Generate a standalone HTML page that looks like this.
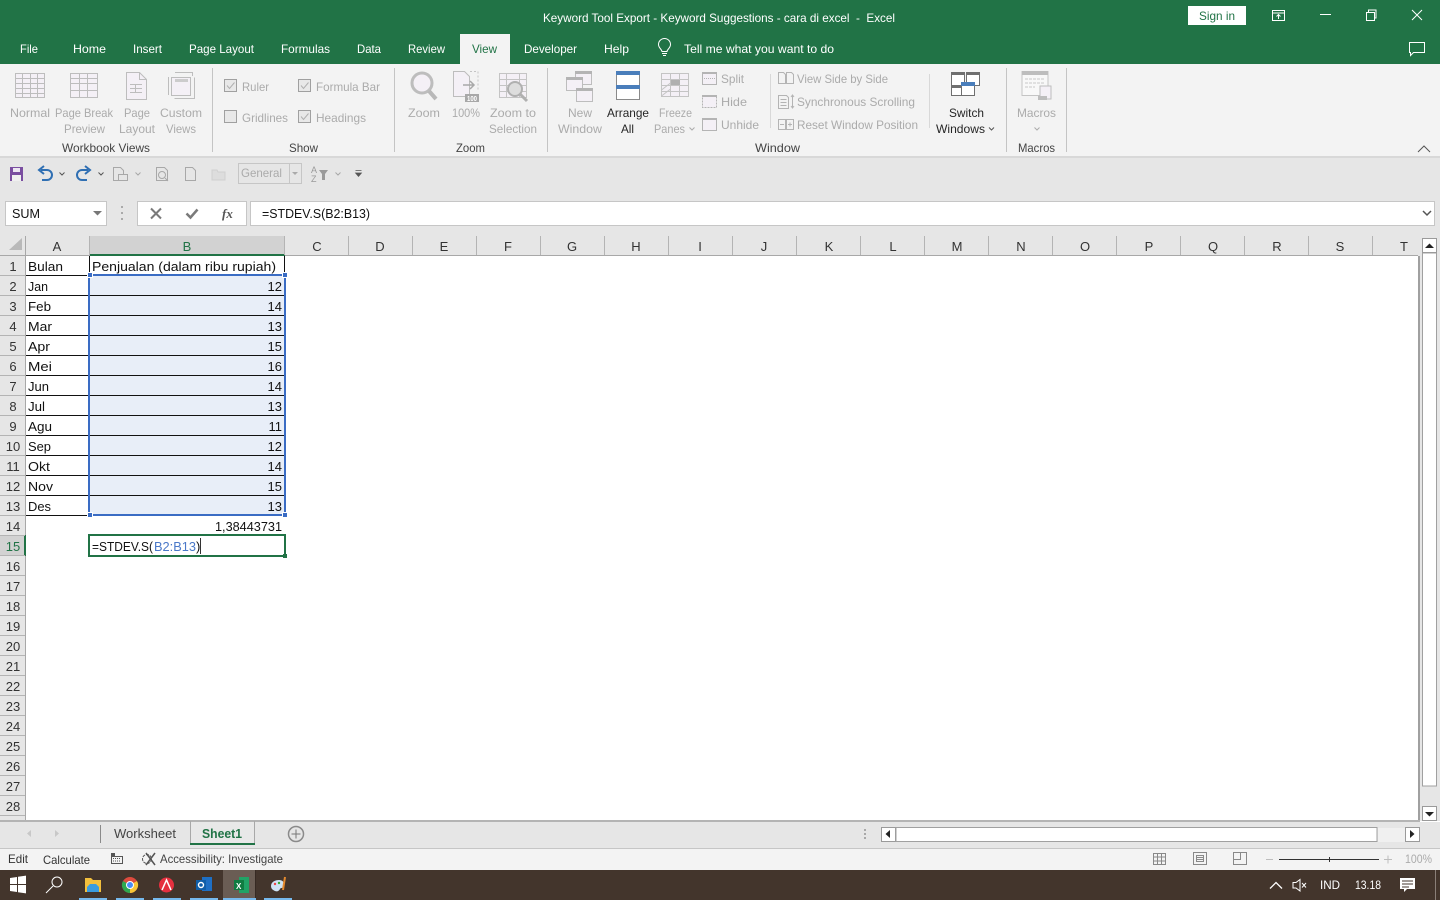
<!DOCTYPE html>
<html lang="id"><head><meta charset="utf-8"><title>Keyword Tool Export - Excel</title>
<style>
html,body{margin:0;padding:0;width:1440px;height:900px;overflow:hidden;background:#fff}
svg{display:block;position:absolute;left:0;top:0}
text{font-family:"Liberation Sans",sans-serif;font-size:12px;white-space:pre}
.w{fill:#fff}.g{fill:#ababab}.d{fill:#444}.k{fill:#262626}
.c{font-size:13px;fill:#111}.h{font-size:13px;fill:#333;text-anchor:middle}
</style></head><body>
<svg width="1440" height="900" viewBox="0 0 1440 900" xmlns="http://www.w3.org/2000/svg">
<!-- chrome backgrounds -->
<rect width="1440" height="64" fill="#217346"/>
<rect y="64" width="1440" height="92" fill="#f3f3f3"/>
<rect y="156" width="1440" height="2" fill="#d8d8d8"/>
<rect y="158" width="1440" height="78" fill="#e6e6e6"/>
<rect y="236" width="1440" height="585" fill="#e6e6e6"/>
<!-- title -->
<text class="w" x="543" y="22" textLength="352" lengthAdjust="spacingAndGlyphs">Keyword Tool Export - Keyword Suggestions - cara di excel  -  Excel</text>
<rect x="1188" y="6" width="58" height="19" fill="#fff"/>
<text x="1199" y="20" fill="#217346" textLength="36" lengthAdjust="spacingAndGlyphs">Sign in</text>
<g fill="none" stroke="#fff" stroke-width="1">
<rect x="1272.5" y="10.5" width="12" height="10"/><path d="M1273 13h11M1278.500 19v-4M1276.500 16.500l2-2 2 2"/>
<path d="M1320 14.500h11"/>
<rect x="1366.500" y="12.500" width="8" height="8"/><path d="M1368.500 12v-2h7.500v8h-1.500"/>
<path d="M1412 10l10 10M1422 10l-10 10"/>
<path d="M1409.500 42.500h15v10h-11l-3 3v-3h-1z"/>
</g>
<!-- tabs -->
<g class="w">
<text class="w" x="20" y="53" textLength="18" lengthAdjust="spacingAndGlyphs">File</text>
<text class="w" x="73" y="53" textLength="33" lengthAdjust="spacingAndGlyphs">Home</text>
<text class="w" x="133" y="53" textLength="29" lengthAdjust="spacingAndGlyphs">Insert</text>
<text class="w" x="189" y="53" textLength="65" lengthAdjust="spacingAndGlyphs">Page Layout</text>
<text class="w" x="281" y="53" textLength="49" lengthAdjust="spacingAndGlyphs">Formulas</text>
<text class="w" x="357" y="53" textLength="24" lengthAdjust="spacingAndGlyphs">Data</text>
<text class="w" x="408" y="53" textLength="37" lengthAdjust="spacingAndGlyphs">Review</text>
<text class="w" x="524" y="53" textLength="53" lengthAdjust="spacingAndGlyphs">Developer</text>
<text class="w" x="604" y="53" textLength="25" lengthAdjust="spacingAndGlyphs">Help</text>
<text class="w" x="684" y="53" textLength="150" lengthAdjust="spacingAndGlyphs">Tell me what you want to do</text>
</g>
<rect x="460" y="34" width="50" height="30" fill="#f3f3f3"/>
<text x="472" y="53" fill="#217346" textLength="25" lengthAdjust="spacingAndGlyphs">View</text>
<path d="M662 51.500c0-2-3.500-3.500-3.500-7a6 6 0 0 1 12 0c0 3.500-3.500 5-3.500 7zM662 53.500h5M663 55.500h3" fill="none" stroke="#fff"/>
<!-- ribbon separators -->
<g fill="#c4c4c4">
<rect x="212" y="68" width="1" height="84"/><rect x="394" y="68" width="1" height="84"/><rect x="547" y="68" width="1" height="84"/>
<rect x="1006" y="68" width="1" height="84"/><rect x="1066" y="68" width="1" height="84"/>
<rect x="770" y="74" width="1" height="54" fill="#d8d8d8"/><rect x="929" y="74" width="1" height="54" fill="#d8d8d8"/>
</g>
<!-- workbook views icons -->
<g fill="#f4f0f6" stroke="#bdbdbd">
<rect x="15.500" y="73.500" width="29" height="24"/>
<path d="M15.500 78.500h29M15.500 83.500h29M15.500 88.500h29M15.500 93.500h29M22.500 73.500v24M30.500 73.500v24M37.500 73.500v24" fill="none"/>
<rect x="70.500" y="73.500" width="27" height="24"/>
<path d="M70.500 78.500h27M70.500 83.500h27M70.500 90.500h27M79.500 73.500v24M87.500 73.500v24" fill="none"/>
<path d="M126.500 72.500h13l7 7v20h-20z"/><path d="M139.500 72.500v7h7M130 84.500h12M130 88.500h12M130 92.500h12M135.500 84v9" fill="none"/>
<rect x="171.500" y="77.500" width="19" height="18"/><rect x="175" y="79" width="13" height="3" fill="#ccc" stroke="none"/>
<path d="M168.500 77v18M175 72.500h17M192.500 72v4M194.500 77.500v21h-20" fill="none"/>
</g>
<g class="g">
<text class="g" x="10" y="117" textLength="40" lengthAdjust="spacingAndGlyphs">Normal</text>
<text class="g" x="55" y="117" textLength="58" lengthAdjust="spacingAndGlyphs">Page Break</text>
<text class="g" x="64" y="133" textLength="41" lengthAdjust="spacingAndGlyphs">Preview</text>
<text class="g" x="124" y="117" textLength="26" lengthAdjust="spacingAndGlyphs">Page</text>
<text class="g" x="119" y="133" textLength="36" lengthAdjust="spacingAndGlyphs">Layout</text>
<text class="g" x="160" y="117" textLength="42" lengthAdjust="spacingAndGlyphs">Custom</text>
<text class="g" x="166" y="133" textLength="30" lengthAdjust="spacingAndGlyphs">Views</text>
<text class="g" x="242" y="91" textLength="27" lengthAdjust="spacingAndGlyphs">Ruler</text>
<text class="g" x="316" y="91" textLength="64" lengthAdjust="spacingAndGlyphs">Formula Bar</text>
<text class="g" x="242" y="122" textLength="46" lengthAdjust="spacingAndGlyphs">Gridlines</text>
<text class="g" x="316" y="122" textLength="50" lengthAdjust="spacingAndGlyphs">Headings</text>
<text class="g" x="408" y="117" textLength="32" lengthAdjust="spacingAndGlyphs">Zoom</text>
<text class="g" x="452" y="117" textLength="28" lengthAdjust="spacingAndGlyphs">100%</text>
<text class="g" x="490" y="117" textLength="46" lengthAdjust="spacingAndGlyphs">Zoom to</text>
<text class="g" x="489" y="133" textLength="48" lengthAdjust="spacingAndGlyphs">Selection</text>
<text class="g" x="568" y="117" textLength="24" lengthAdjust="spacingAndGlyphs">New</text>
<text class="g" x="558" y="133" textLength="44" lengthAdjust="spacingAndGlyphs">Window</text>
<text class="g" x="659" y="117" textLength="33" lengthAdjust="spacingAndGlyphs">Freeze</text>
<text class="g" x="654" y="133" textLength="31" lengthAdjust="spacingAndGlyphs">Panes</text>
<text class="g" x="721" y="83" textLength="23" lengthAdjust="spacingAndGlyphs">Split</text>
<text class="g" x="721" y="106" textLength="26" lengthAdjust="spacingAndGlyphs">Hide</text>
<text class="g" x="721" y="129" textLength="38" lengthAdjust="spacingAndGlyphs">Unhide</text>
<text class="g" x="797" y="83" textLength="91" lengthAdjust="spacingAndGlyphs">View Side by Side</text>
<text class="g" x="797" y="106" textLength="118" lengthAdjust="spacingAndGlyphs">Synchronous Scrolling</text>
<text class="g" x="797" y="129" textLength="121" lengthAdjust="spacingAndGlyphs">Reset Window Position</text>
<text class="g" x="1017" y="117" textLength="39" lengthAdjust="spacingAndGlyphs">Macros</text>
</g>
<text class="k" x="607" y="117" textLength="42" lengthAdjust="spacingAndGlyphs">Arrange</text>
<text class="k" x="621" y="133" textLength="13" lengthAdjust="spacingAndGlyphs">All</text>
<text class="k" x="949" y="117" textLength="35" lengthAdjust="spacingAndGlyphs">Switch</text>
<text class="k" x="936" y="133" textLength="49" lengthAdjust="spacingAndGlyphs">Windows</text>
<text class="d" x="62" y="152" textLength="88" lengthAdjust="spacingAndGlyphs">Workbook Views</text>
<text class="d" x="289" y="152" textLength="29" lengthAdjust="spacingAndGlyphs">Show</text>
<text class="d" x="456" y="152" textLength="29" lengthAdjust="spacingAndGlyphs">Zoom</text>
<text class="d" x="755" y="152" textLength="45" lengthAdjust="spacingAndGlyphs">Window</text>
<text class="d" x="1018" y="152" textLength="37" lengthAdjust="spacingAndGlyphs">Macros</text>
<!-- checkboxes -->
<g fill="#e8e8e8" stroke="#a0a0a0">
<rect x="224.500" y="79.500" width="12" height="12"/><rect x="298.500" y="79.500" width="12" height="12"/>
<rect x="224.500" y="110.500" width="12" height="12"/><rect x="298.500" y="110.500" width="12" height="12"/>
</g>
<path d="M227 85.500l2.500 3 5-6M301 85.500l2.500 3 5-6M301 116.500l2.500 3 5-6" fill="none" stroke="#b0b0b0"/>
<!-- zoom icons -->
<circle cx="422" cy="83" r="10" fill="#f4f0f6" stroke="#bdbdbd" stroke-width="3"/>
<path d="M429 91l7 8" stroke="#b8b8b8" stroke-width="4"/>
<path d="M453.500 71.500h11l5 5v20h-16z" fill="#f4f0f6" stroke="#bdbdbd"/>
<path d="M470 71.500h8v20" fill="none" stroke="#c4c4c4" stroke-dasharray="2 2"/>
<path d="M463 85h11M470 81l4 4-4 4" fill="none" stroke="#a8a8a8" stroke-width="1.500"/>
<rect x="465" y="94" width="14" height="8" fill="#a8a8a8"/>
<text x="467" y="101" style="font-size:7px;font-weight:bold" fill="#fff" textLength="10" lengthAdjust="spacingAndGlyphs">100</text>
<g fill="none" stroke="#c4c4c4"><rect x="499.500" y="73.500" width="27" height="24" fill="#f4f0f6"/><path d="M499.500 79.500h27M499.500 85.500h27M499.500 91.500h27M506.500 73.500v24M519.500 73.500v24"/></g>
<circle cx="515" cy="89" r="7" fill="#ddd" stroke="#b0b0b0" stroke-width="2"/><path d="M520 94l7 7" stroke="#b0b0b0" stroke-width="3"/>
<!-- window icons -->
<g fill="#f4f0f6" stroke="#bdbdbd">
<rect x="575.500" y="71.500" width="16" height="13"/><rect x="566.500" y="77.500" width="16" height="13"/><rect x="576.500" y="88.500" width="16" height="13"/>
</g>
<path d="M575 71h17v3h-17zM566 77h17v3h-17zM576 88h17v3h-17z" fill="#b4b4b4"/>
<rect x="616.500" y="71.500" width="23" height="28" fill="#fff" stroke="#8a8a8a"/>
<rect x="616" y="71" width="24" height="4" fill="#4a7ebb"/><rect x="616" y="85" width="24" height="4" fill="#4a7ebb"/>
<g fill="#f4f0f6" stroke="#c4c4c4"><rect x="661.500" y="73.500" width="27" height="23"/><path d="M661.500 79.500h27M661.500 85.500h27M661.500 91.500h27M670.500 73.500v23M679.500 73.500v23M661.500 90l9-7M661.500 96l9-7" fill="none"/></g>
<rect x="671" y="80" width="9" height="5" fill="#b0b0b0"/>
<g fill="#f4f0f6" stroke="#b4b4b4">
<rect x="702.500" y="72.500" width="14" height="12"/><rect x="702.500" y="95.500" width="14" height="12" stroke-dasharray="2 1"/><rect x="702.500" y="118.500" width="14" height="12"/>
</g>
<path d="M702 72h15v2h-15zM702 95h15v2h-15zM702 118h15v2h-15z" fill="#b4b4b4"/>
<path d="M704 78.500h11" stroke="#b4b4b4" stroke-dasharray="1 1"/>
<g fill="none" stroke="#b4b4b4">
<path d="M778.500 83.500v-11h5l2 2v9zM786.500 83.500v-11h5l2 2v9z"/>
<path d="M778.500 95.500h8l2 2v11h-10zM780.500 99.500h6M780.500 102.500h6M780.500 105.500h6M792.500 95v13M791 97l1.500-2 1.500 2M791 106l1.500 2 1.500-2"/>
<rect x="778.500" y="119.500" width="7" height="10"/><rect x="786.500" y="119.500" width="7" height="10"/><path d="M780 124.500h4M788 124.500h4M790 122.500v4"/>
</g>
<g stroke="#6f6f6f" fill="#fff">
<rect x="951.500" y="72.500" width="13" height="13"/><rect x="966.500" y="72.500" width="13" height="13"/><rect x="951.500" y="85.500" width="10" height="10"/>
<rect x="961.500" y="82.500" width="13" height="13"/>
</g>
<path d="M951 72h14v3h-14zM966 72h14v3h-14zM951 85h10v3h-10z" fill="#6f6f6f"/><rect x="961" y="82" width="14" height="4" fill="#4a7ebb"/>
<rect x="1022" y="71.500" width="26" height="24" fill="#f8f8f8" stroke="#c4c4c4"/><rect x="1022" y="71" width="26" height="4" fill="#bdbdbd"/>
<path d="M1025 79h20M1025 83h20M1025 87h10" stroke="#c8c8c8" stroke-dasharray="3 1"/>
<path d="M1040 86h11v13h-11z" fill="#f4f0f6" stroke="#bdbdbd"/><rect x="1038" y="96" width="9" height="4" fill="#bdbdbd"/>
<g fill="none">
<path d="M689.500 127.500l2.500 2.500 2.500-2.500" stroke="#ababab"/>
<path d="M989 127.500l2.500 2.500 2.500-2.500" stroke="#555"/>
<path d="M1034.500 127.500l2.500 2.500 2.500-2.500" stroke="#ababab"/>
<path d="M1418 152l6-6 6 6" stroke="#555"/>
</g>
<!-- QAT -->
<rect x="10" y="167" width="13" height="14" fill="#7a4ea0"/><rect x="13" y="168" width="7" height="4" fill="#ece6f2"/><rect x="12" y="175" width="9" height="6" fill="#f0f0f0"/>
<path d="M41 170h6a5 5 0 0 1 0 10h-5M44 166l-5 4 5 4" fill="none" stroke="#2f6fb3" stroke-width="2"/>
<path d="M88 170h-6a5 5 0 0 0 0 10h5M85 166l5 4-5 4" fill="none" stroke="#2f6fb3" stroke-width="2"/>
<g fill="none" stroke="#555"><path d="M59.500 172.500l2.500 2.500 2.500-2.500M98.500 172.500l2.500 2.500 2.500-2.500"/></g>
<g fill="none" stroke="#a8a8a8">
<path d="M113.500 167.500h7l3 3v10h-10z"/><rect x="118.500" y="174.500" width="9" height="6" fill="#e6e6e6"/>
<path d="M135.500 172.500l2.500 2.500 2.500-2.500M335.500 172.500l2.500 2.500 2.500-2.500"/>
<path d="M156.500 167.500h8l3 3v10h-11z"/><circle cx="162" cy="175" r="3.500"/><path d="M165 178l3 3"/>
<path d="M185.500 167.500h7l3 3v10h-10z"/>
</g>
<path d="M212 170h5l1 2h7v8h-13z" fill="#ddd" stroke="#d0d0d0"/>
<rect x="238.500" y="163.500" width="63" height="20" fill="#e6e6e6" stroke="#c6c6c6"/>
<path d="M289.500 164v19" stroke="#c6c6c6"/><path d="M292 172h6l-3 3z" fill="#aaa"/>
<text class="g" x="241" y="177" textLength="41" lengthAdjust="spacingAndGlyphs">General</text>
<text x="311" y="173" style="font-size:9px" fill="#9a9a9a">A</text><text x="311" y="182" style="font-size:9px" fill="#9a9a9a">Z</text>
<path d="M319 170h9l-3 4v6h-3v-6z" fill="#9a9a9a"/>
<path d="M355.500 170.500h6M355.500 173h6l-3 3.500z" fill="#555" stroke="#555" stroke-width=".7"/>
<!-- formula bar -->
<rect x="5.500" y="201.500" width="101" height="24" fill="#fff" stroke="#c6c6c6"/>
<text x="12" y="218" class="c" textLength="28" lengthAdjust="spacingAndGlyphs">SUM</text>
<path d="M93 211h9l-4.500 4.500z" fill="#777"/>
<path d="M122 206v2M122 212v2M122 218v2" stroke="#aaa" stroke-width="2"/>
<rect x="137.500" y="201.500" width="109" height="24" fill="#fff" stroke="#c6c6c6"/>
<path d="M151 208.500l10 10M161 208.500l-10 10" stroke="#7a7a7a" stroke-width="2"/>
<path d="M186.500 213.500l4 4 7-8" fill="none" stroke="#7a7a7a" stroke-width="2.500"/>
<text x="222" y="218" style="font:italic bold 13px 'Liberation Serif',serif" fill="#555">fx</text>
<rect x="250.500" y="201.500" width="1184" height="24" fill="#fff" stroke="#c6c6c6"/>
<text class="c" x="262" y="218" textLength="108" lengthAdjust="spacingAndGlyphs">=STDEV.S(B2:B13)</text>
<path d="M1423 211l4 4 4-4" fill="none" stroke="#555" stroke-width="1.500"/>
<!-- grid -->
<rect x="26" y="256" width="1392" height="564" fill="#fff"/>
<rect x="1418" y="256" width="2" height="565" fill="#a0a0a0"/>
<rect x="0" y="820" width="1420" height="2" fill="#b4b4b4"/>
<path d="M9 250L22 238V250z" fill="#b9b9b9"/>
<rect x="0" y="255" width="1418" height="1" fill="#a8a8a8"/>
<rect x="25" y="236" width="1" height="584" fill="#a8a8a8"/>
<rect x="90" y="236" width="195" height="20" fill="#d2d2d2"/>
<rect x="90" y="254" width="195" height="2" fill="#217346"/>
<rect x="0" y="536" width="25" height="20" fill="#d2d2d2"/>
<rect x="24" y="535" width="2" height="21" fill="#217346"/>
<!-- column header separators -->
<path d="M89.500 236v19M284.500 236v19M348.500 236v19M412.500 236v19M476.500 236v19M540.500 236v19M604.500 236v19M668.500 236v19M732.500 236v19M796.500 236v19M860.500 236v19M924.500 236v19M988.500 236v19M1052.500 236v19M1116.500 236v19M1180.500 236v19M1244.500 236v19M1308.500 236v19M1372.500 236v19" stroke="#b4b4b4"/>
<text class="h" x="57" y="251">A</text><text class="h" x="187" y="251" style="fill:#217346">B</text>
<text class="h" x="317" y="251">C</text><text class="h" x="380" y="251">D</text><text class="h" x="444" y="251">E</text><text class="h" x="508" y="251">F</text><text class="h" x="572" y="251">G</text><text class="h" x="636" y="251">H</text><text class="h" x="700" y="251">I</text><text class="h" x="764" y="251">J</text><text class="h" x="829" y="251">K</text><text class="h" x="893" y="251">L</text><text class="h" x="957" y="251">M</text><text class="h" x="1021" y="251">N</text><text class="h" x="1085" y="251">O</text><text class="h" x="1149" y="251">P</text><text class="h" x="1213" y="251">Q</text><text class="h" x="1277" y="251">R</text><text class="h" x="1340" y="251">S</text><text class="h" x="1404" y="251">T</text>
<!-- row headers -->
<path d="M0 275.500h25M0 295.500h25M0 315.500h25M0 335.500h25M0 355.500h25M0 375.500h25M0 395.500h25M0 415.500h25M0 435.500h25M0 455.500h25M0 475.500h25M0 495.500h25M0 515.500h25M0 535.500h25M0 555.500h25M0 575.500h25M0 595.500h25M0 615.500h25M0 635.500h25M0 655.500h25M0 675.500h25M0 695.500h25M0 715.500h25M0 735.500h25M0 755.500h25M0 775.500h25M0 795.500h25M0 815.500h25" stroke="#b4b4b4"/>
<g>
<text class="h" x="13" y="271">1</text><text class="h" x="13" y="291">2</text><text class="h" x="13" y="311">3</text><text class="h" x="13" y="331">4</text><text class="h" x="13" y="351">5</text><text class="h" x="13" y="371">6</text><text class="h" x="13" y="391">7</text><text class="h" x="13" y="411">8</text><text class="h" x="13" y="431">9</text><text class="h" x="13" y="451">10</text><text class="h" x="13" y="471">11</text><text class="h" x="13" y="491">12</text><text class="h" x="13" y="511">13</text><text class="h" x="13" y="531">14</text><text class="h" x="13" y="551" style="fill:#217346">15</text><text class="h" x="13" y="571">16</text><text class="h" x="13" y="591">17</text><text class="h" x="13" y="611">18</text><text class="h" x="13" y="631">19</text><text class="h" x="13" y="651">20</text><text class="h" x="13" y="671">21</text><text class="h" x="13" y="691">22</text><text class="h" x="13" y="711">23</text><text class="h" x="13" y="731">24</text><text class="h" x="13" y="751">25</text><text class="h" x="13" y="771">26</text><text class="h" x="13" y="791">27</text><text class="h" x="13" y="811">28</text>
</g>
<!-- selection fill and table borders -->
<rect x="90" y="276" width="194" height="238" fill="#e8eef8"/>
<path d="M26 275.500h63M26 295.500h258M26 315.500h258M26 335.500h258M26 355.500h258M26 375.500h258M26 395.500h258M26 415.500h258M26 435.500h258M26 455.500h258M26 475.500h258M26 495.500h258M26 515.500h63M89.500 256v260M284.500 256v20" stroke="#111" fill="none"/>
<!-- cell text -->
<text class="c" x="28" y="271" textLength="35" lengthAdjust="spacingAndGlyphs">Bulan</text>
<text class="c" x="92" y="271" textLength="184" lengthAdjust="spacingAndGlyphs">Penjualan (dalam ribu rupiah)</text>
<text class="c" x="28" y="291" textLength="20" lengthAdjust="spacingAndGlyphs">Jan</text>
<text class="c" x="28" y="311" textLength="23" lengthAdjust="spacingAndGlyphs">Feb</text>
<text class="c" x="28" y="331" textLength="24" lengthAdjust="spacingAndGlyphs">Mar</text>
<text class="c" x="28" y="351" textLength="22" lengthAdjust="spacingAndGlyphs">Apr</text>
<text class="c" x="28" y="371" textLength="24" lengthAdjust="spacingAndGlyphs">Mei</text>
<text class="c" x="28" y="391" textLength="21" lengthAdjust="spacingAndGlyphs">Jun</text>
<text class="c" x="28" y="411" textLength="17" lengthAdjust="spacingAndGlyphs">Jul</text>
<text class="c" x="28" y="431" textLength="24" lengthAdjust="spacingAndGlyphs">Agu</text>
<text class="c" x="28" y="451" textLength="23" lengthAdjust="spacingAndGlyphs">Sep</text>
<text class="c" x="28" y="471" textLength="22" lengthAdjust="spacingAndGlyphs">Okt</text>
<text class="c" x="28" y="491" textLength="25" lengthAdjust="spacingAndGlyphs">Nov</text>
<text class="c" x="28" y="511" textLength="23" lengthAdjust="spacingAndGlyphs">Des</text>
<g style="text-anchor:end">
<text class="c" x="282" y="291">12</text><text class="c" x="282" y="311">14</text><text class="c" x="282" y="331">13</text><text class="c" x="282" y="351">15</text><text class="c" x="282" y="371">16</text><text class="c" x="282" y="391">14</text><text class="c" x="282" y="411">13</text><text class="c" x="282" y="431">11</text><text class="c" x="282" y="451">12</text><text class="c" x="282" y="471">14</text><text class="c" x="282" y="491">15</text><text class="c" x="282" y="511">13</text>
</g>
<text class="c" x="215" y="531" textLength="67" lengthAdjust="spacingAndGlyphs">1,38443731</text>
<!-- blue range -->
<rect x="89" y="275" width="196" height="240" fill="none" stroke="#3a6cc4" stroke-width="2"/>
<g fill="#3a6cc4" stroke="#fff"><rect x="87.500" y="272.500" width="5" height="5"/><rect x="282.500" y="272.500" width="5" height="5"/><rect x="87.500" y="512.500" width="5" height="5"/><rect x="282.500" y="512.500" width="5" height="5"/></g>
<!-- active cell -->
<rect x="89" y="535" width="196" height="21" fill="#fff" stroke="#217346" stroke-width="2"/>
<rect x="283" y="554" width="4" height="4" fill="#217346"/>
<text class="c" x="92" y="551" textLength="61" lengthAdjust="spacingAndGlyphs">=STDEV.S(</text>
<text class="c" x="154" y="551" style="fill:#4a78c8" textLength="42" lengthAdjust="spacingAndGlyphs">B2:B13</text>
<text class="c" x="196" y="551">)</text>
<rect x="200" y="538" width="1" height="16" fill="#333"/>
<!-- vertical scroll -->
<rect x="1422.500" y="253" width="14" height="533" fill="#fff" stroke="#a0a0a0"/>
<rect x="1422.500" y="238.500" width="14" height="14" fill="#fff" stroke="#9a9a9a"/>
<rect x="1422.500" y="806.500" width="14" height="14" fill="#fff" stroke="#9a9a9a"/>
<path d="M1425 248h9l-4.500-4.500z" fill="#222"/><path d="M1425 812h9l-4.500 4.500z" fill="#222"/>
<!-- sheet tabs bar -->
<rect y="822" width="1440" height="26" fill="#e6e6e6"/>
<rect y="848" width="1440" height="1" fill="#c6c6c6"/>
<path d="M31 830v7l-4-3.500zM55 830v7l4-3.500z" fill="#c8c8c8"/>
<rect x="100" y="825" width="1" height="18" fill="#8a8a8a"/>
<text x="114" y="838" style="font-size:13px" fill="#444" textLength="62" lengthAdjust="spacingAndGlyphs">Worksheet</text>
<path d="M190.500 821v24M254.500 821v24" stroke="#a8a8a8"/>
<rect x="191" y="822" width="63" height="23" fill="#e8e8e8"/>
<rect x="190" y="843" width="65" height="2" fill="#217346"/>
<text x="202" y="838" style="font-size:13px;font-weight:bold" fill="#217346" textLength="40" lengthAdjust="spacingAndGlyphs">Sheet1</text>
<circle cx="296" cy="834" r="7.500" fill="none" stroke="#8a8a8a" stroke-width="1.500"/><path d="M291.500 834h9M296 829.500v9" stroke="#777"/>
<path d="M865 829v2M865 833v2M865 837v2" stroke="#a8a8a8" stroke-width="2"/>
<rect x="881.500" y="827.500" width="14" height="14" fill="#fff" stroke="#9a9a9a"/>
<path d="M890 830v8l-4.500-4z" fill="#222"/>
<rect x="896" y="827.500" width="481" height="14" fill="#fff" stroke="#a0a0a0"/>
<rect x="1378" y="828" width="27" height="14" fill="#f0f0f0"/>
<rect x="1405.500" y="827.500" width="14" height="14" fill="#fff" stroke="#9a9a9a"/>
<path d="M1410 830v8l4.500-4z" fill="#222"/>
<!-- status -->
<rect y="849" width="1440" height="21" fill="#f3f3f3"/>
<text x="8" y="863" fill="#333" textLength="20" lengthAdjust="spacingAndGlyphs">Edit</text>
<text x="43" y="864" fill="#333" textLength="47" lengthAdjust="spacingAndGlyphs">Calculate</text>
<g fill="none" stroke="#555">
<rect x="111.500" y="856.500" width="11" height="7"/><path d="M113 858.500h8M113 861h8" stroke-dasharray="1 1"/>
<circle cx="147" cy="859" r="4.500" stroke-dasharray="3 1"/><path d="M146 853l9 12M155 853l-9 12" stroke-width="1.500"/>
</g>
<rect x="111" y="853" width="4" height="3" fill="#555"/>
<text x="160" y="863" fill="#444" textLength="123" lengthAdjust="spacingAndGlyphs">Accessibility: Investigate</text>
<g fill="none" stroke="#888">
<rect x="1153.500" y="853.500" width="12" height="11"/><path d="M1157.500 853.500v11M1161.500 853.500v11M1153.500 857h12M1153.500 861h12"/>
<rect x="1193.500" y="852.500" width="13" height="12"/><rect x="1196.500" y="855.500" width="7" height="6"/><path d="M1197 857.500h6M1197 859.500h6"/>
<rect x="1233.500" y="852.500" width="13" height="12"/><path d="M1240.500 852.500v7h-7"/>
<path d="M1266 859.500h7M1384 859.500h8M1388 855.500v8" stroke="#bdbdbd"/>
</g>
<rect x="1279" y="859" width="100" height="1" fill="#333"/><rect x="1329" y="857" width="1" height="5" fill="#333"/>
<text class="g" x="1405" y="863" textLength="27" lengthAdjust="spacingAndGlyphs">100%</text>
<!-- taskbar -->
<rect y="870" width="1440" height="30" fill="#43352c"/>
<rect x="223" y="870" width="33" height="30" fill="#6a5d54"/>
<rect x="255" y="870" width="1" height="30" fill="#362a23"/>
<path d="M10 878l7-1v7h-7zM18 876.800l8-1.200v8.400h-8zM10 885h7v7l-7-1zM18 885h8v8.400l-8-1.200z" fill="#fff"/>
<circle cx="57" cy="882" r="5" fill="none" stroke="#fff"/><path d="M53 886l-7 7" stroke="#fff"/>
<path d="M85 878h6l2 2h8v12H85z" fill="#f2bf3d"/><path d="M90 884h6l3 3v5H87v-5z" fill="#3a9ce0"/>
<circle cx="130" cy="885" r="8" fill="#dd4b3e"/><path d="M130 885L137 881A8 8 0 0 1 130 893z" fill="#f8c537"/><path d="M130 885v8a8 8 0 0 1-7-12z" fill="#2ea84f"/><circle cx="130" cy="885" r="3.500" fill="#4a8df6" stroke="#fff"/>
<circle cx="166.500" cy="885" r="7.500" fill="#e5303f"/><path d="M162 890l4.500-10 4.500 10" fill="none" stroke="#fff" stroke-width="1.500"/>
<rect x="202" y="877" width="10" height="14" fill="#1e6fc4"/><rect x="196" y="880" width="10" height="10" fill="#0f5ea8"/><circle cx="201" cy="885" r="2.500" fill="none" stroke="#fff" stroke-width="1.400"/>
<rect x="239" y="877" width="10" height="16" fill="#21a366"/><rect x="234" y="880" width="10" height="10" fill="#107c41"/>
<text x="236" y="889" style="font-size:8px;font-weight:bold" fill="#fff">X</text>
<path d="M271 886c0-4 4-6 8-6s6 3 5 6-3 1-4 3-3 3-5 2-4-2-4-5z" fill="#cfe3f4"/>
<circle cx="275" cy="884" r="1.200" fill="#e44"/><circle cx="279" cy="883" r="1.200" fill="#3a3"/><path d="M283 890l2-13" stroke="#e58a2e" stroke-width="2"/>
<g fill="#76b9ed"><rect x="79" y="898" width="28" height="2"/><rect x="116" y="898" width="28" height="2"/><rect x="153" y="898" width="28" height="2"/><rect x="190" y="898" width="28" height="2"/><rect x="223" y="898" width="33" height="2"/><rect x="264" y="898" width="28" height="2"/></g>
<path d="M1270 888.500l6-6 6 6" fill="none" stroke="#fff" stroke-width="1.300"/>
<path d="M1293 882.500h3l4-3v11.500l-4-3h-3z" fill="none" stroke="#fff"/><path d="M1302 883l4 4.500M1306 883l-4 4.500" stroke="#fff"/>
<text class="w" x="1320" y="889" textLength="20" lengthAdjust="spacingAndGlyphs">IND</text>
<text class="w" x="1355" y="889" textLength="26" lengthAdjust="spacingAndGlyphs">13.18</text>
<path d="M1400 878h15v11h-8l-3 3v-3h-4z" fill="#fff"/><path d="M1402 881h11M1402 884h11M1402 887h7" stroke="#43352c"/>
<rect x="1435" y="870" width="1" height="30" fill="#8a7f78"/>
</svg>
</body></html>
